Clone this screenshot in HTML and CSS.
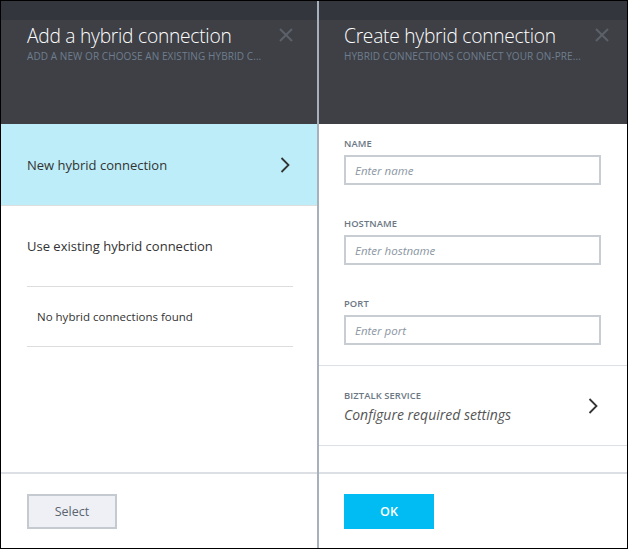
FILE: index.html
```html
<!DOCTYPE html>
<html>
<head>
<meta charset="utf-8">
<link rel="stylesheet" href="styles.css">
</head>
<body>
<div class="frame">
  <section class="blade blade-left">
    <header class="blade-head">
      <div class="head-strip"></div>
      <div class="head-main">
        <div class="head-text">
          <h1 class="title">Add a hybrid connection</h1>
          <div class="subtitle">ADD A NEW OR CHOOSE AN EXISTING HYBRID C...</div>
        </div>
        <svg class="close" width="14" height="14" viewBox="0 0 14 14"><path d="M1 1 L13 13 M13 1 L1 13" stroke="#5c6068" stroke-width="2" fill="none"/></svg>
      </div>
    </header>
    <div class="blade-body">
      <div class="row row-selected">
        <span class="row-text">New hybrid connection</span>
        <svg class="chev" width="10" height="16" viewBox="0 0 10 16"><path d="M1.5 1 L8.5 8 L1.5 15" stroke="#333" stroke-width="1.8" fill="none"/></svg>
      </div>
      <div class="row row-plain">
        <span class="row-text">Use existing hybrid connection</span>
      </div>
      <div class="empty">No hybrid connections found</div>
    </div>
    <footer class="blade-foot">
      <button class="btn btn-select">Select</button>
    </footer>
  </section>
  <div class="divider"></div>
  <section class="blade blade-right">
    <header class="blade-head">
      <div class="head-strip"></div>
      <div class="head-main">
        <div class="head-text">
          <h1 class="title">Create hybrid connection</h1>
          <div class="subtitle">HYBRID CONNECTIONS CONNECT YOUR ON-PRE...</div>
        </div>
        <svg class="close" width="14" height="14" viewBox="0 0 14 14"><path d="M1 1 L13 13 M13 1 L1 13" stroke="#5c6068" stroke-width="2" fill="none"/></svg>
      </div>
    </header>
    <div class="blade-body">
      <div class="form">
        <div class="field">
          <label class="label">NAME</label>
          <div class="input"><span class="ph">Enter name</span></div>
        </div>
        <div class="field">
          <label class="label">HOSTNAME</label>
          <div class="input"><span class="ph">Enter hostname</span></div>
        </div>
        <div class="field">
          <label class="label">PORT</label>
          <div class="input"><span class="ph">Enter port</span></div>
        </div>
      </div>
      <div class="setting">
        <div class="setting-text">
          <div class="label">BIZTALK SERVICE</div>
          <div class="setting-value">Configure required settings</div>
        </div>
        <svg class="chev" width="10" height="16" viewBox="0 0 10 16"><path d="M1.5 1 L8.5 8 L1.5 15" stroke="#333" stroke-width="1.8" fill="none"/></svg>
      </div>
    </div>
    <footer class="blade-foot">
      <button class="btn btn-ok">OK</button>
    </footer>
  </section>
</div>
</body>
</html>
```

FILE: styles.css
```css
* { box-sizing: border-box; }
html, body { margin: 0; padding: 0; }
body {
  width: 628px;
  height: 549px;
  background: #000;
  font-family: "Open Sans", "Noto Sans", sans-serif;
  overflow: hidden;
}
.frame {
  width: 628px;
  height: 549px;
  border: 1px solid #000;
  display: flex;
  background: #fff;
}
.blade {
  display: flex;
  flex-direction: column;
  height: 547px;
  background: #fff;
}
.blade-left { width: 316px; }
.blade-right { width: 308px; }
.divider {
  width: 2px;
  background: #a7b1bb;
}
.blade-head {
  height: 123px;
  display: flex;
  flex-direction: column;
  background: #3e4046;
}
.head-strip {
  height: 19px;
  background: #33363c;
}
.head-main {
  display: flex;
  justify-content: space-between;
  align-items: flex-start;
}
.blade-left .head-main { padding: 3px 24px 0 26px; }
.blade-right .head-main { padding: 3px 18px 0 25px; }
.title {
  margin: 0;
  font-weight: 300;
  font-size: 19.2px;
  line-height: 26px;
  color: #fff;
  letter-spacing: -0.25px;
}
.subtitle {
  margin-top: 1px;
  font-size: 10px;
  line-height: 12px;
  color: #6f7e8e;
  letter-spacing: 0.08px;
}
.close { margin-top: 5px; }
.blade-body {
  flex: 1;
  display: flex;
  flex-direction: column;
}
.row {
  display: flex;
  align-items: center;
  justify-content: space-between;
  padding: 0 27px 0 26px;
}
.row-text {
  font-size: 13px;
  color: #333;
}
.row-selected {
  height: 82px;
  background: #bdedf8;
  border-bottom: 1px solid #dedede;
}
.row-plain {
  height: 81px;
  margin: 0 24px 0 26px;
  padding: 0;
  border-bottom: 1px solid #dddddd;
}
.empty {
  height: 60px;
  margin: 0 24px 0 26px;
  padding-left: 10px;
  display: flex;
  align-items: center;
  font-size: 11.5px;
  color: #333;
  border-bottom: 1px solid #dddddd;
}
.blade-foot {
  height: 76px;
  border-top: 2px solid #dcdfe3;
  padding: 20px 0 0 26px;
}
.blade-right .blade-foot { padding-left: 25px; }
.btn {
  width: 90px;
  height: 35px;
  font-family: inherit;
  font-size: 12.5px;
  cursor: pointer;
}
.btn-select {
  background: #eef0f5;
  border: 2px solid #c5cad0;
  color: #5a6470;
}
.btn-ok {
  background: #00bcf2;
  border: none;
  color: #fff;
  font-weight: 600;
}
.form {
  padding: 14px 26px 0 25px;
  display: flex;
  flex-direction: column;
  gap: 33px;
}
.field {
  display: flex;
  flex-direction: column;
}
.label {
  font-size: 9.4px;
  font-weight: 600;
  line-height: 12px;
  color: #6b7785;
  letter-spacing: 0.1px;
}
.field .label { margin-bottom: 5px; }
.input {
  height: 30px;
  border: 2px solid #c8cdd3;
  padding: 0 9px;
  display: flex;
  align-items: center;
}
.ph {
  font-style: italic;
  font-size: 11.5px;
  color: #8a96a2;
}
.setting {
  margin-top: 20px;
  height: 81px;
  border-top: 1px solid #dcdfe3;
  border-bottom: 1px solid #dcdfe3;
  display: flex;
  align-items: center;
  justify-content: space-between;
  padding: 0 29px 0 25px;
}
.setting-text { margin-top: 3px; }
.setting-value {
  margin-top: 3px;
  font-style: italic;
  font-size: 14px;
  color: #555;
}
```
